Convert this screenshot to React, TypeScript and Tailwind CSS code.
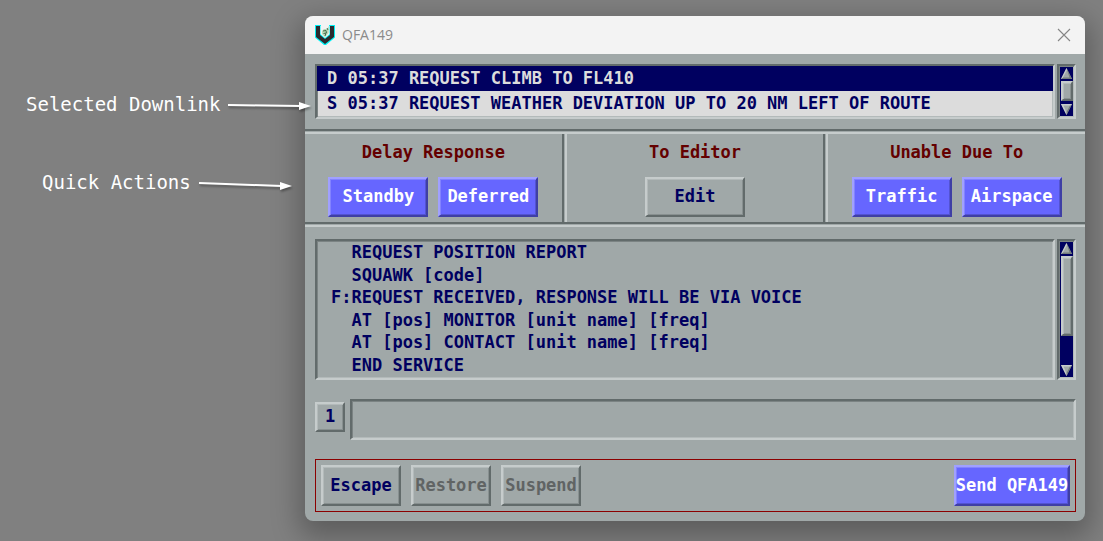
import { clsx } from "clsx";
import { type ReactNode } from "react";

const raised =
  "border-2 border-t-[#c6cccc] border-l-[#c6cccc] border-r-[#626b6b] border-b-[#626b6b] shadow-[inset_1px_1px_#b3baba,inset_-1px_-1px_#889090]";
const sunken =
  "border-2 border-t-[#626b6b] border-l-[#626b6b] border-r-[#c6cccc] border-b-[#c6cccc] shadow-[inset_1px_1px_#7b8383,inset_-1px_-1px_#b3baba]";
const primary =
  "border-2 border-t-[#a0a0ff] border-l-[#a0a0ff] border-r-[#3f3fa5] border-b-[#3f3fa5] bg-[#6666ff] text-white shadow-[inset_1px_1px_#8383ff,inset_-1px_-1px_#5353d2]";

const downlinks = [
  { text: "D 05:37 REQUEST CLIMB TO FL410", selected: true },
  { text: "S 05:37 REQUEST WEATHER DEVIATION UP TO 20 NM LEFT OF ROUTE", selected: false },
];

const messages = [
  "  REQUEST POSITION REPORT",
  "  SQUAWK [code]",
  "F:REQUEST RECEIVED, RESPONSE WILL BE VIA VOICE",
  "  AT [pos] MONITOR [unit name] [freq]",
  "  AT [pos] CONTACT [unit name] [freq]",
  "  END SERVICE",
];

export default function App() {
  return (
    <div className="flex min-h-screen items-start bg-[#808080] pt-4 pr-[18px] pb-5">
      <aside className="z-10 w-[305px] shrink-0 pt-[76px] font-['DejaVu_Sans_Mono',monospace] text-[19px] leading-6 text-white">
        <div className="flex pl-[26px]">
          <span className="whitespace-nowrap">Selected Downlink</span>
          <Arrow width={84} drop={1} />
        </div>
        <div className="mt-[54px] flex pl-[42px]">
          <span className="whitespace-nowrap">Quick Actions</span>
          <Arrow width={94} drop={3} />
        </div>
      </aside>

      <main className="min-w-0 flex-1 overflow-hidden rounded-lg bg-[#a0a8a8] font-['DejaVu_Sans_Mono',monospace] text-[17px] font-bold text-[#000060] shadow-[0_10px_28px_6px_rgba(0,0,0,0.28)]">
        <header className="flex h-[38px] items-center bg-[#f3f3f3] px-[10px]">
          <Logo />
          <h1 className="ml-[7px] font-['Open_Sans',sans-serif] text-sm font-normal text-[#8a8a8a]">QFA149</h1>
          <button type="button" aria-label="Close" className="ml-auto p-1">
            <svg width="14" height="14" viewBox="0 0 14 14" stroke="#858585" strokeWidth="1.1">
              <path d="M1 1 L13 13 M13 1 L1 13" />
            </svg>
          </button>
        </header>

        <section className="flex gap-[2px] p-[10px] pr-[9px]">
          <ul className={clsx("min-w-0 flex-1 bg-[#dcdcdc] pb-px", sunken)}>
            {downlinks.map((d) => (
              <li
                key={d.text}
                className={clsx(
                  "h-[25px] overflow-hidden pl-[10px] leading-6 whitespace-pre",
                  d.selected && "bg-[#000060] text-[#dcdcdc]",
                )}
              >
                {d.text}
              </li>
            ))}
          </ul>
          <Scrollbar thumb="h-[20px]" />
        </section>

        <Divider />
        <section className="flex">
          <Group title="Delay Response">
            <Action primary>Standby</Action>
            <Action primary>Deferred</Action>
          </Group>
          <VerticalDivider />
          <Group title="To Editor">
            <Action>Edit</Action>
          </Group>
          <VerticalDivider />
          <Group title="Unable Due To">
            <Action primary>Traffic</Action>
            <Action primary>Airspace</Action>
          </Group>
        </section>
        <Divider />

        <section className="flex gap-[2px] pt-3 pr-[9px] pl-[10px]">
          <ul className={clsx("grid h-[141px] min-w-0 flex-1 grid-rows-6 pb-[2px]", sunken)}>
            {messages.map((m) => (
              <li key={m} className="flex items-center pl-[14px] leading-5 whitespace-pre">
                {m}
              </li>
            ))}
          </ul>
          <Scrollbar thumb="h-[80px]" />
        </section>

        <section className="mt-[19px] flex items-start gap-[5px] pr-[9px] pl-[10px]">
          <button type="button" className={clsx("mt-[3px] size-[30px] pb-[2px] leading-6", raised)}>
            1
          </button>
          <input aria-label="Response" className={clsx("h-[41px] min-w-0 flex-1 px-2 outline-none", sunken)} />
        </section>

        <footer className="mt-[19px] mr-[9px] mb-[9px] ml-[10px] flex gap-[10px] border border-solid border-[#8b0000] p-[5px]">
          <FooterButton>Escape</FooterButton>
          <FooterButton disabled>Restore</FooterButton>
          <FooterButton disabled>Suspend</FooterButton>
          <button
            type="button"
            className={clsx("ml-auto flex h-[41px] w-[116px] items-center justify-center whitespace-nowrap", primary)}
          >
            Send QFA149
          </button>
        </footer>
      </main>
    </div>
  );
}

function Group({ title, children }: { title: string; children: ReactNode }) {
  return (
    <div className="flex h-[88px] min-w-0 flex-1 flex-col items-center pt-[6px]">
      <h2 className="leading-6 text-[#640000]">{title}</h2>
      <div className="mt-[13px] flex gap-[10px]">{children}</div>
    </div>
  );
}

function Action({ primary: isPrimary, children }: { primary?: boolean; children: ReactNode }) {
  return (
    <button type="button" className={clsx("h-10 w-[100px] pb-[2px] leading-6", isPrimary ? primary : raised)}>
      {children}
    </button>
  );
}

function FooterButton({ disabled, children }: { disabled?: boolean; children: ReactNode }) {
  return (
    <button
      type="button"
      disabled={disabled}
      className={clsx("flex h-[41px] w-[80px] items-center justify-center disabled:text-[#606464]", raised)}
    >
      {children}
    </button>
  );
}

function Divider() {
  return <div className="h-[5px] border-t-2 border-b-2 border-t-[#626b6b] border-b-[#c6cccc]" />;
}

function VerticalDivider() {
  return <div className="w-[5px] border-r-2 border-l-2 border-r-[#c6cccc] border-l-[#626b6b]" />;
}

function Scrollbar({ thumb }: { thumb: string }) {
  return (
    <div className={clsx("flex w-[19px] flex-col items-center bg-[#000060]", sunken)}>
      <button type="button" aria-label="Scroll up" className="flex h-[15px] shrink-0 items-center justify-center">
        <svg width="11" height="11" viewBox="0 0 11 11">
          <path d="M5.5 0 L11 11 H0 Z" fill="#a0a8a8" />
          <path d="M5.5 0 L11 11 H0 L2 9.5 H8.5 Z" fill="#727b7b" />
          <path d="M5.5 0 L0 11 L2 9.5 L6 2 Z" fill="#c6cccc" />
        </svg>
      </button>
      <div className={clsx("w-[12px] shrink-0 bg-[#a0a8a8]", raised, thumb)} />
      <button type="button" aria-label="Scroll down" className="mt-auto flex h-[15px] shrink-0 items-center justify-center">
        <svg width="11" height="11" viewBox="0 0 11 11">
          <path d="M5.5 11 L11 0 H0 Z" fill="#a0a8a8" />
          <path d="M5.5 11 L11 0 L9 1.5 L5 9 Z" fill="#727b7b" />
          <path d="M0 0 H11 L9.5 1.5 H2.5 L5.5 8.5 V11 Z" fill="#c6cccc" />
        </svg>
      </button>
    </div>
  );
}

function Arrow({ width, drop }: { width: number; drop: number }) {
  const y = 13;
  const tip = y + drop;
  return (
    <svg
      width={width}
      height="24"
      viewBox={`0 0 ${width} 24`}
      className="ml-[7px] shrink-0 overflow-visible drop-shadow-[1px_2px_1px_rgba(0,0,0,0.35)]"
    >
      <path d={`M1 ${y} L${width - 10} ${tip}`} stroke="white" strokeWidth="2" />
      <path d={`M${width - 12} ${tip - 4} L${width} ${tip} L${width - 12} ${tip + 4} Z`} fill="white" />
    </svg>
  );
}

function Logo() {
  return (
    <svg width="20" height="20" viewBox="0 0 20 20" aria-hidden="true">
      <path d="M0 0 H6 V9 L10 12.5 L14 9 V0 H20 V12.5 L11 20 H9 L0 12.5 Z" fill="#00f0f4" />
      <path d="M1 1 H5 V10 L10 14 L15 10 V1 H19 V12 L10 19 L1 12 Z" fill="#2b2b2f" />
      <path d="M5.5 1 H14.5 V9 L10 13 L5.5 9 Z" fill="#f3f3f3" />
      <path d="M7 6 L9 4 L12 4 L14 1 L13.5 8 L10 12 L7 9 Z" fill="#b9d8b8" />
      <path d="M8 6 L11 5.5 L11.5 8 M8.5 8.5 L11 8 L10 11 M12 3 L13 5" fill="none" stroke="#456b4b" strokeWidth="1" />
    </svg>
  );
}
